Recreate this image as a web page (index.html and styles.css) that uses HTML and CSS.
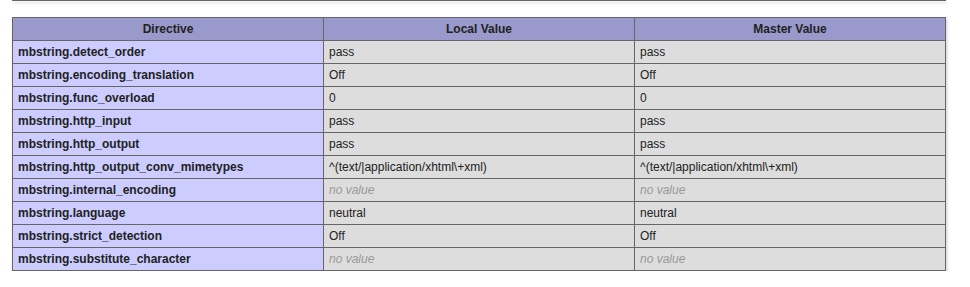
FILE: index.html
```
<!DOCTYPE html>
<html>
<head>
<meta charset="utf-8">
<link rel="stylesheet" href="styles.css">
</head>
<body>
<div class="center">
<div class="prev"></div>
<table>
<tr class="h"><th>Directive</th><th>Local Value</th><th>Master Value</th></tr>
<tr><td class="e">mbstring.detect_order</td><td class="v">pass</td><td class="v">pass</td></tr>
<tr><td class="e">mbstring.encoding_translation</td><td class="v">Off</td><td class="v">Off</td></tr>
<tr><td class="e">mbstring.func_overload</td><td class="v">0</td><td class="v">0</td></tr>
<tr><td class="e">mbstring.http_input</td><td class="v">pass</td><td class="v">pass</td></tr>
<tr><td class="e">mbstring.http_output</td><td class="v">pass</td><td class="v">pass</td></tr>
<tr><td class="e">mbstring.http_output_conv_mimetypes</td><td class="v">^(text/|application/xhtml\+xml)</td><td class="v">^(text/|application/xhtml\+xml)</td></tr>
<tr><td class="e">mbstring.internal_encoding</td><td class="v"><i>no value</i></td><td class="v"><i>no value</i></td></tr>
<tr><td class="e">mbstring.language</td><td class="v">neutral</td><td class="v">neutral</td></tr>
<tr><td class="e">mbstring.strict_detection</td><td class="v">Off</td><td class="v">Off</td></tr>
<tr><td class="e">mbstring.substitute_character</td><td class="v"><i>no value</i></td><td class="v"><i>no value</i></td></tr>
</table>
</div>
</body>
</html>
```
FILE: styles.css
```
html, body {
  margin: 0;
  padding: 0;
  background-color: #fff;
  color: #222;
  font-family: "Liberation Sans", Arial, sans-serif;
}
.center {
  width: 958px;
  text-align: left;
}
.prev {
  width: 932px;
  height: 0;
  margin: 0 auto;
  border: 1px solid #666;
  border-top: 0;
  box-shadow: 1px 2px 3px #ccc;
}
table {
  border-collapse: collapse;
  border: 0;
  width: 934px;
  margin: 16px auto 0;
  box-shadow: 1px 2px 3px #ccc;
}
td, th {
  border: 1px solid #666;
  font-size: 12px;
  vertical-align: baseline;
  padding: 4px 5px;
}
th { text-align: center; }
.h { background-color: #99c; font-weight: bold; }
.e { background-color: #ccf; width: 300px; font-weight: bold; }
.v { background-color: #ddd; width: 300px; }
.v i { color: #999; }
```
